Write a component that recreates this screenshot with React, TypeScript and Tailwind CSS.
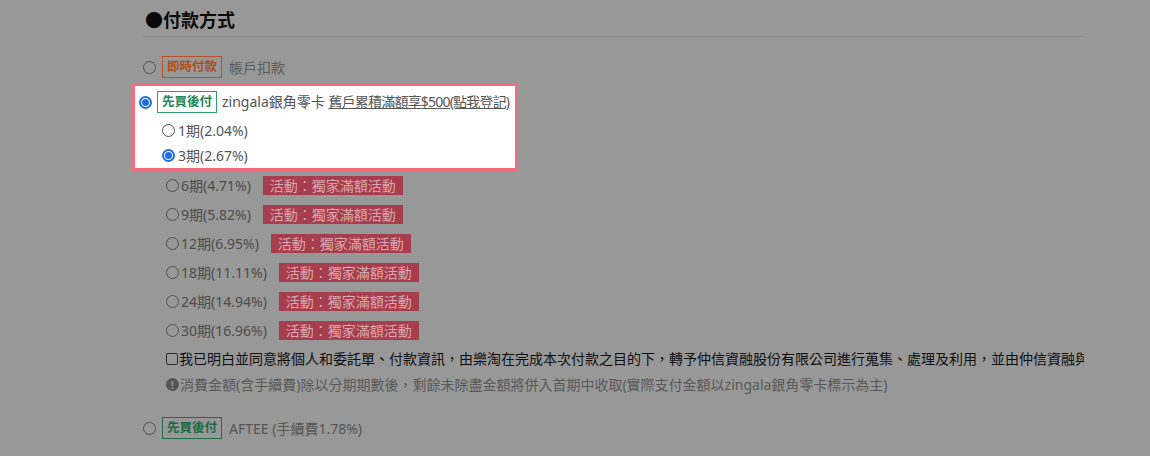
const PERIODS = [
  { n: 6, rate: '4.71%' },
  { n: 9, rate: '5.82%' },
  { n: 12, rate: '6.95%' },
  { n: 18, rate: '11.11%' },
  { n: 24, rate: '14.94%' },
  { n: 30, rate: '16.96%' },
]

function Radio({ checked = false }: { checked?: boolean }) {
  if (checked) {
    return (
      <span className="w-[13px] h-[13px] rounded-full border-2 border-[#1a6fe6] flex items-center justify-center shrink-0">
        <span className="w-[7px] h-[7px] rounded-full bg-[#1a6fe6]" />
      </span>
    )
  }
  return <span className="w-[13px] h-[13px] rounded-full border border-[#4e4e4e] shrink-0" />
}

function Tag({ kind, children }: { kind: 'green' | 'greenDim' | 'orange'; children: string }) {
  const cls =
    kind === 'green'
      ? 'border-[#2f9c6d] text-[#1e8757]'
      : kind === 'greenDim'
        ? 'border-[#1f6e4a] text-[#1b6a45]'
        : 'border-[#b2532a] text-[#ae4f22]'
  return (
    <span className={`h-[22px] px-[4px] border flex items-center text-[12.5px] font-semibold shrink-0 ${cls}`}>
      {children}
    </span>
  )
}

export default function App() {
  return (
    <div
      className="w-[1150px] h-[456px] bg-[#989898] overflow-hidden text-[14px]"
      style={{ fontFamily: '"Noto Sans", "Noto Sans CJK TC", sans-serif' }}
    >
      <div className="ml-[143px] w-[941px]">
        {/* heading */}
        <h2 className="pt-[8px] h-[36px] text-[18px] leading-[24px] font-bold text-[#0a0a0a] pl-[2px]">●付款方式</h2>
        <div className="border-b border-[#8b8b8b]" />

        {/* instant */}
        <div className="mt-[19px] h-[22px] flex items-center gap-[6px]">
          <Radio />
          <Tag kind="orange">即時付款</Tag>
          <span className="text-[#5a5a5a] ml-[1px]">帳戶扣款</span>
        </div>

        {/* highlighted zingala */}
        <div className="mt-[5px] -ml-[11px] w-[386px] border-[3px] border-[#f46a7f] bg-white pl-[4px] pt-[5px] pb-[3px]">
          <div className="h-[22px] flex items-center gap-[5px] whitespace-nowrap">
            <Radio checked />
            <Tag kind="green">先買後付</Tag>
            <span className="text-[#555] leading-[20px]">
              zingala銀角零卡{' '}
              <span className="underline tracking-[-0.8px]">舊戶累積滿額享$500(點我登記)</span>
            </span>
          </div>
          <div className="mt-[7px] h-[20px] pl-[23px] flex items-center gap-[3px] text-[#555]">
            <Radio />
            <span>1期(2.04%)</span>
          </div>
          <div className="mt-[5px] h-[20px] pl-[23px] flex items-center gap-[3px] text-[#555]">
            <Radio checked />
            <span>3期(2.67%)</span>
          </div>
        </div>

        {/* other periods */}
        <div className="pl-[23px]">
          {PERIODS.map((p) => (
            <div key={p.n} className="h-[29px] flex items-center text-[#4c4c4c]">
              <Radio />
              <span className="ml-[2px]">
                {p.n}期({p.rate})
              </span>
              <span className="ml-[12px] h-[19px] px-[7px] flex items-center bg-[#a63e4d] text-[#dba7ae] leading-none">
                活動：獨家滿額活動
              </span>
            </div>
          ))}

          <div className="h-[27px] flex items-center text-[#0f0f0f] overflow-hidden whitespace-nowrap">
            <span className="w-[12px] h-[12px] border border-[#2a2a2a] rounded-[2px] shrink-0 mr-[1px]" />
            <span>
              我已明白並同意將個人和委託單、付款資訊，由樂淘在完成本次付款之目的下，轉予仲信資融股份有限公司進行蒐集、處理及利用，並由仲信資融與
            </span>
          </div>
          <div className="h-[25px] flex items-center text-[#585858] whitespace-nowrap">
            <span className="w-[13px] h-[13px] rounded-full bg-[#555] text-[#989898] text-[10px] font-bold flex items-center justify-center leading-none shrink-0 mr-[1px]">
              !
            </span>
            <span>消費金額(含手續費)除以分期期數後，剩餘未除盡金額將併入首期中收取(實際支付金額以zingala銀角零卡標示為主)</span>
          </div>
        </div>

        {/* aftee */}
        <div className="mt-[20px] h-[22px] flex items-center gap-[6px]">
          <Radio />
          <Tag kind="greenDim">先買後付</Tag>
          <span className="text-[#555] ml-[1px]">AFTEE (手續費1.78%)</span>
        </div>
      </div>
    </div>
  )
}
